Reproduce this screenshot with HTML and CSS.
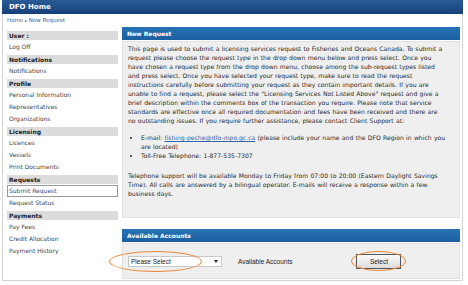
FILE: index.html
```html
<html lang="en">
	<head>
		<meta charset="UTF-8" />
		<meta name="viewport" content="width=device-width, initial-scale=1.0" />
		<title>DFO Home - New Request</title>
		<link rel="stylesheet" href="styles.css">
	</head>
	<body>
		<div class="frame">
			<div class="topbar">DFO Home</div>
			<div class="crumbs"><a href="#">Home</a> <span class="sep">&#9656;</span> <a href="#">New Request</a></div>

			<div class="layout">
				<div class="sidebar">
					<div class="side-head">User :</div>
					<a class="side-item" href="#">Log Off</a>

					<div class="side-head">Notifications</div>
					<a class="side-item" href="#">Notifications</a>

					<div class="side-head">Profile</div>
					<a class="side-item" href="#">Personal Information</a>
					<a class="side-item" href="#">Representatives</a>
					<a class="side-item" href="#">Organizations</a>

					<div class="side-head">Licensing</div>
					<a class="side-item" href="#">Licences</a>
					<a class="side-item" href="#">Vessels</a>
					<a class="side-item" href="#">Print Documents</a>

					<div class="side-head">Requests</div>
					<a class="side-item active" href="#">Submit Request</a>
					<a class="side-item" href="#">Request Status</a>

					<div class="side-head">Payments</div>
					<a class="side-item" href="#">Pay Fees</a>
					<a class="side-item" href="#">Credit Allocation</a>
					<a class="side-item" href="#">Payment History</a>
				</div>

				<div class="main">
					<div class="panel-head">New Request</div>
					<div class="panel-body intro">
						<p>This page is used to submit a licensing services request to Fisheries and Oceans Canada. To submit a<br>
						request please choose the request type in the drop down menu below and press select. Once you<br>
						have chosen a request type from the drop down menu, choose among the sub-request types listed<br>
						and press select. Once you have selected your request type, make sure to read the request<br>
						instructions carefully before submitting your request as they contain important details. If you are<br>
						unable to find a request, please select the "Licensing Services Not Listed Above" request and give a<br>
						brief description within the comments box of the transaction you require. Please note that service<br>
						standards are effective once all required documentation and fees have been received and there are<br>
						no outstanding issues. If you require further assistance, please contact Client Support at:</p>
						<ul>
							<li>E-mail: <a href="#">fishing-peche@dfo-mpo.gc.ca</a> (please include your name and the DFO Region in which you<br>
							are located)</li>
							<li>Toll-Free Telephone: 1-877-535-7307</li>
						</ul>
						<p>Telephone support will be available Monday to Friday from 07:00 to 20:00 (Eastern Daylight Savings<br>
						Time). All calls are answered by a bilingual operator. E-mails will receive a response within a few<br>
						business days.</p>
					</div>

					<div class="panel-head second">Available Accounts</div>
					<div class="panel-body accounts">
						<div class="select-wrap">
							<select class="account-select">
								<option>Please Select</option>
							</select>
							<span class="mark mark-select"></span>
						</div>
						<label class="account-label">Available Accounts</label>
						<div class="button-wrap">
							<button class="select-btn">Select</button>
							<span class="mark mark-button"></span>
						</div>
					</div>
				</div>
			</div>
		</div>
	</body>
</html>
```

FILE: styles.css
```css
body {
	margin: 0;
	font-family: "DejaVu Sans", Verdana, sans-serif;
	font-size: 6px;
	color: #333;
	background: #fff;
}
a {
	text-decoration: none;
}
.frame {
	width: 461px;
	height: 281px;
	margin-left: 2px;
	border: 1px solid #d4d4d4;
	border-top: none;
	box-sizing: border-box;
}
.topbar {
	height: 14px;
	line-height: 14px;
	padding-left: 7px;
	margin: 0 -1px;
	background: linear-gradient(#2a5c98, #173f78);
	color: #fff;
	font-weight: bold;
	font-size: 7px;
}
.crumbs {
	height: 13px;
	line-height: 13px;
	padding-left: 4px;
	font-size: 5.5px;
	color: #3a5f9a;
}
.crumbs a {
	color: #3a5f9a;
}
.crumbs .sep {
	font-size: 4px;
	color: #555;
}
.layout {
	display: flex;
	gap: 4px;
	padding-left: 4px;
}
.sidebar {
	width: 111px;
	padding-top: 2px;
}
.side-head {
	height: 9px;
	line-height: 9px;
	margin-top: 2px;
	margin-bottom: 1px;
	padding-left: 2px;
	background: #dcdcdc;
	color: #222;
	font-weight: bold;
}
.side-item {
	display: block;
	height: 12px;
	line-height: 12px;
	padding-left: 2px;
	color: #444;
	box-sizing: border-box;
}
.side-item.active {
	border: 1px solid #9a9a9a;
	line-height: 10px;
	padding-left: 1px;
	color: #2d4f86;
}
.main {
	width: 338px;
}
.panel-head {
	height: 13px;
	line-height: 13px;
	padding-left: 5px;
	background: linear-gradient(#2773b5, #1b5f9f);
	color: #fff;
	font-weight: bold;
	font-size: 6px;
}
.panel-head.second {
	margin-top: 11px;
}
.panel-body {
	margin-top: 1px;
	background: #efefef;
	border: 1px solid #e2e2e2;
	box-sizing: border-box;
}
.intro {
	height: 177px;
	padding: 2px 3px 0 5px;
	font-size: 6.1px;
	word-spacing: 0.3px;
	line-height: 9px;
	color: #2a2a2a;
	white-space: nowrap;
}
.intro p {
	margin: 0;
}
.intro ul {
	margin: 8px 0 11px 0;
	padding-left: 13px;
}
.intro ul a {
	color: #3366aa;
	text-decoration: underline;
}
.accounts {
	height: 36px;
	display: flex;
	align-items: center;
	padding-left: 5px;
	font-family: "Liberation Sans", Arial, sans-serif;
	font-size: 6.5px;
}
.select-wrap {
	position: relative;
}
.account-select {
	display: block;
	width: 94px;
	height: 11px;
	padding: 0 2px;
	border: 1px solid #c8c8c8;
	background: #fff;
	font-family: "Liberation Sans", Arial, sans-serif;
	font-size: 6.5px;
	color: #222;
	appearance: none;
	-webkit-appearance: none;
	border-radius: 0;
}
.select-wrap::after {
	content: "";
	position: absolute;
	right: 4px;
	top: 4px;
	border-left: 2px solid transparent;
	border-right: 2px solid transparent;
	border-top: 3px solid #222;
}
.account-label {
	margin-left: 16px;
	color: #222;
}
.button-wrap {
	position: relative;
	margin-left: 64px;
}
.select-btn {
	display: block;
	width: 45px;
	height: 15px;
	padding: 0;
	border: 1px solid #555;
	background: linear-gradient(#fbfbfb, #dcdcdc);
	font-family: "Liberation Sans", Arial, sans-serif;
	font-size: 6.5px;
	color: #222;
}
.mark {
	position: absolute;
	border: 1px solid #f0883a;
	border-radius: 50%;
}
.mark-select {
	left: -19px;
	top: -5px;
	width: 91px;
	height: 19px;
}
.mark-button {
	left: -5px;
	top: -3px;
	width: 53px;
	height: 18px;
}
```
